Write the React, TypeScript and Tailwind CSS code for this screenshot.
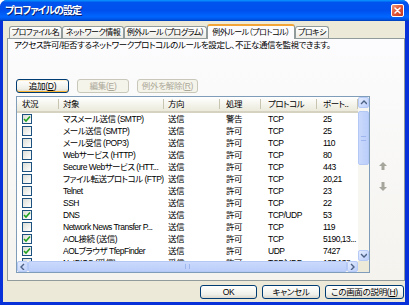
import React from 'react'

type Row = { on: boolean; name: string; dir: string; act: string; proto: string; port: string }

const rows: Row[] = [
  { on: true, name: 'マスメール送信 (SMTP)', dir: '送信', act: '警告', proto: 'TCP', port: '25' },
  { on: false, name: 'メール送信 (SMTP)', dir: '送信', act: '許可', proto: 'TCP', port: '25' },
  { on: false, name: 'メール受信 (POP3)', dir: '送信', act: '許可', proto: 'TCP', port: '110' },
  { on: false, name: 'Webサービス (HTTP)', dir: '送信', act: '許可', proto: 'TCP', port: '80' },
  { on: false, name: 'Secure Webサービス (HTT...', dir: '送信', act: '許可', proto: 'TCP', port: '443' },
  { on: false, name: 'ファイル転送プロトコル (FTP)', dir: '送信', act: '許可', proto: 'TCP', port: '20,21' },
  { on: false, name: 'Telnet', dir: '送信', act: '許可', proto: 'TCP', port: '23' },
  { on: false, name: 'SSH', dir: '送信', act: '許可', proto: 'TCP', port: '22' },
  { on: true, name: 'DNS', dir: '送信', act: '許可', proto: 'TCP/UDP', port: '53' },
  { on: false, name: 'Network News Transfer P...', dir: '送信', act: '許可', proto: 'TCP', port: '119' },
  { on: true, name: 'AOL接続 (送信)', dir: '送信', act: '許可', proto: 'TCP', port: '5190,13...' },
  { on: true, name: 'AOLブラウザ TfepFinder', dir: '送信', act: '許可', proto: 'UDP', port: '7427' },
  { on: false, name: 'NetBIOS (受信)', dir: '受信', act: '許可', proto: 'TCP/UDP', port: '137,138' },
]

// column widths + text offsets, header and body share them
const cols = [
  'w-[42px] pl-[5px]',
  'w-[105px] pl-[4px]',
  'w-[56px] pl-[4px]',
  'w-[41px] pl-[6px]',
  'w-[56px] pl-[7px]',
  'w-[41px] pl-[6px]',
]
const heads = ['状況', '対象', '方向', '処理', 'プロトコル', 'ポート..']

const tabCls =
  'flex h-[12px] shrink-0 items-center justify-center whitespace-nowrap rounded-t-[3px] border border-b-0 border-[#919B9C] bg-[linear-gradient(180deg,#FFFFFF,#ECEBE5)]'

function CheckBox({ on }: { on: boolean }) {
  return (
    <span className="flex h-[10px] w-[10px] items-center justify-center border border-[#1C5180] bg-[linear-gradient(135deg,#DCDCD7,#FFFFFF)]">
      {on && (
        <svg width="8" height="8" viewBox="0 0 8 8">
          <polyline points="1,4 3,6 7,1.5" fill="none" stroke="#21A121" strokeWidth="1.6" />
        </svg>
      )}
    </span>
  )
}

function XpButton({ children, disabled, focus, className }: { children: React.ReactNode; disabled?: boolean; focus?: boolean; className?: string }) {
  return (
    <button
      type="button"
      className={
        'flex h-[14px] shrink-0 items-center justify-center whitespace-nowrap rounded-[3px] border leading-none ' +
        (disabled
          ? 'border-[#C9C7BA] bg-[#F5F4EA] text-[#ACA899] '
          : 'border-[#003C74] bg-[linear-gradient(180deg,#FFFFFF,#F0F0EA_70%,#DCD8CC)] text-black ') +
        (focus ? 'shadow-[inset_0_-1px_0_#F8B330,inset_0_1px_0_#FFF0CF] ' : '') +
        (className ?? '')
      }
    >
      {children}
    </button>
  )
}

function ScrollArrow({ dir }: { dir: 'up' | 'down' | 'left' | 'right' }) {
  const pts = {
    up: '1,5 4,2 7,5',
    down: '1,2 4,5 7,2',
    left: '5,1 2,4 5,7',
    right: '2,1 5,4 2,7',
  }[dir]
  return (
    <span className="flex h-[11px] w-[11px] shrink-0 items-center justify-center rounded-[2px] border border-[#B5CAF6] bg-[linear-gradient(135deg,#E4ECFE,#BCCFFB)]">
      <svg width="7" height="7" viewBox="0 0 7 7">
        <polyline points={pts} fill="none" stroke="#4D6185" strokeWidth="1.4" />
      </svg>
    </span>
  )
}

export default function App() {
  return (
    <div className="flex h-[305px] w-[409px] flex-col overflow-hidden rounded-t-[7px] bg-[#0831D9] font-['Liberation_Sans','Noto_Sans_CJK_JP',sans-serif] [font-feature-settings:'palt'] text-[8.5px] tracking-[-0.3px] text-black">
      {/* Title bar */}
      <div className="flex h-[21px] shrink-0 items-center justify-between bg-[linear-gradient(180deg,#0997FF_0%,#0053EE_12%,#0050EE_50%,#0066FF_80%,#0055E5_92%,#003DB5_100%)] pl-[5px] pr-[5px]">
        <span className="text-[10px] font-bold leading-none tracking-[-1px] text-white [text-shadow:1px_1px_0_#0A1E6E]">プロファイルの設定</span>
        <span className="flex h-[13px] w-[13px] items-center justify-center rounded-[2px] border border-white bg-[linear-gradient(135deg,#F09A7C,#E2583A_45%,#C4391E)]">
          <svg width="7" height="7" viewBox="0 0 7 7">
            <path d="M1 1 L6 6 M6 1 L1 6" stroke="white" strokeWidth="1.5" strokeLinecap="round" />
          </svg>
        </span>
      </div>

      {/* Body */}
      <div className="mb-[3px] ml-[3px] mr-[4px] flex flex-1 flex-col bg-[#ECE9D8]">
        {/* Tabs */}
        <div className="ml-[6px] mt-[3px] flex h-[14px] items-end text-[8px] tracking-[-0.5px]">
          <div className={tabCls + ' w-[53px]'}>プロファイル名</div>
          <div className={tabCls + ' w-[62px]'}>ネットワーク情報</div>
          <div className={tabCls + ' w-[83px]'}>例外ルール（プログラム）</div>
          <div className="relative z-10 -mb-px flex h-[15px] w-[88px] shrink-0 items-center justify-center whitespace-nowrap rounded-t-[3px] border border-b-0 border-t-2 border-[#919B9C] border-t-[#F2A437] bg-[#FCFCFE]">
            例外ルール（プロトコル）
          </div>
          <div className={tabCls + ' w-[34px]'}>プロキシ</div>
        </div>

        {/* Tab panel */}
        <div className="ml-[4px] flex h-[243px] flex-col border border-[#919B9C] bg-[linear-gradient(180deg,#FCFCFE,#F4F3EE)]">
          <div className="h-[12px] whitespace-nowrap pl-[6px] leading-[12px] tracking-[-0.45px]">
            アクセス許可/拒否するネットワークプロトコルのルールを設定し、不正な通信を監視できます。
          </div>

          <div className="ml-[8px] mt-[28px] flex gap-[8px]">
            <XpButton focus className="w-[53px]">
              追加(<span className="underline">D</span>)
            </XpButton>
            <XpButton disabled className="w-[52px]">
              編集(<span className="underline">E</span>)
            </XpButton>
            <XpButton disabled className="w-[61px]">
              例外を解除(<span className="underline">R</span>)
            </XpButton>
          </div>

          <div className="ml-[8px] mt-[3px] flex">
            {/* List view */}
            <div className="flex h-[177px] w-[354px] flex-col border border-[#7F9DB9] bg-white tracking-[-0.5px]">
              <div className="flex min-h-0 flex-1">
                <div className="flex min-w-0 flex-1 flex-col overflow-hidden">
                  <div className="flex h-[16px] shrink-0 border-b-2 border-[#D6D2C2] bg-[linear-gradient(180deg,#FFFFFF,#EBEADB)]">
                    {heads.map((h, i) => (
                      <div key={h} className={'flex shrink-0 items-center overflow-hidden ' + cols[i]}>
                        <span className="flex-1 overflow-hidden whitespace-nowrap">{h}</span>
                        <span className="h-[10px] w-px shrink-0 bg-[#C7C5B2]" />
                      </div>
                    ))}
                  </div>
                  {rows.map((r, idx) => (
                    <div key={idx} className="flex h-[12px] shrink-0 items-center leading-[12px]">
                      <div className={'flex shrink-0 items-center ' + cols[0]}>
                        <CheckBox on={r.on} />
                      </div>
                      <div className={'shrink-0 overflow-hidden whitespace-nowrap ' + cols[1]}>{r.name}</div>
                      <div className={'shrink-0 overflow-hidden whitespace-nowrap ' + cols[2]}>{r.dir}</div>
                      <div className={'shrink-0 overflow-hidden whitespace-nowrap ' + cols[3]}>{r.act}</div>
                      <div className={'shrink-0 overflow-hidden whitespace-nowrap ' + cols[4]}>{r.proto}</div>
                      <div className={'shrink-0 overflow-hidden whitespace-nowrap ' + cols[5]}>{r.port}</div>
                    </div>
                  ))}
                </div>
                {/* vertical scrollbar */}
                <div className="flex w-[11px] shrink-0 flex-col bg-[#F7F6F1]">
                  <ScrollArrow dir="up" />
                  <div className="mt-[3px] flex h-[54px] items-center justify-center rounded-[2px] border border-[#B4C8F6] bg-[linear-gradient(90deg,#CAD9FC,#BBCEFA)]">
                    <span className="h-[5px] w-[5px] border-y border-[#9FB5EE]" />
                  </div>
                  <div className="flex-1" />
                  <ScrollArrow dir="down" />
                </div>
              </div>
              {/* horizontal scrollbar */}
              <div className="flex h-[11px] shrink-0">
                <div className="flex flex-1 bg-[#F7F6F1]">
                  <ScrollArrow dir="left" />
                  <div className="flex flex-1 items-center justify-center rounded-[2px] border border-[#B4C8F6] bg-[linear-gradient(180deg,#CAD9FC,#BBCEFA)]">
                    <span className="h-[5px] w-[5px] border-x border-[#9FB5EE]" />
                  </div>
                  <ScrollArrow dir="right" />
                </div>
                <div className="w-[11px] shrink-0 bg-[#ECE9D8]" />
              </div>
            </div>

            {/* move up / down */}
            <div className="ml-[9px] flex flex-col pt-[66px]">
              <svg width="8" height="8" viewBox="0 0 8 8">
                <polygon points="4,0 8,4 5.5,4 5.5,8 2.5,8 2.5,4 0,4" fill="#A7A69C" />
              </svg>
              <svg width="8" height="9" viewBox="0 0 8 9" className="mt-[12px]">
                <polygon points="4,9 8,5 5.5,5 5.5,0 2.5,0 2.5,5 0,5" fill="#A7A69C" />
              </svg>
            </div>
          </div>
        </div>

        {/* Dialog buttons */}
        <div className="mt-[4px] flex justify-end gap-[5px] pr-[1px]">
          <XpButton className="w-[57px]">OK</XpButton>
          <XpButton className="w-[58px]">キャンセル</XpButton>
          <XpButton className="w-[79px]">
            この画面の説明(<span className="underline">H</span>)
          </XpButton>
        </div>
      </div>
    </div>
  )
}
